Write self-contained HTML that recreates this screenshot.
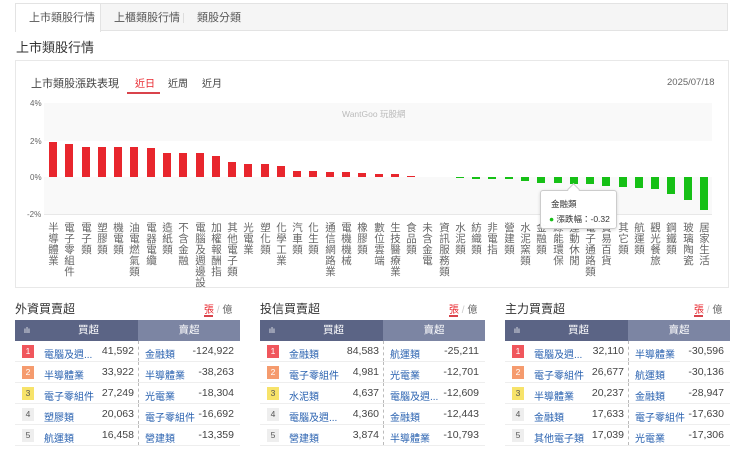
<!DOCTYPE html>
<html><head><meta charset="utf-8">
<style>
*{margin:0;padding:0;box-sizing:border-box}
body{width:740px;height:449px;background:#fff;font-family:"Liberation Sans","Noto Sans CJK TC",sans-serif;color:#333;position:relative;overflow:hidden}
.a{position:absolute}
.tabs{left:15px;top:3px;width:713px;height:28px;background:#f5f5f5;border:1px solid #e3e3e3}
.tab{position:absolute;top:9px;font-size:11px;color:#555}
.b{position:absolute;width:8px}
.r{background:#e8262d}
.g{background:#16c016}
.lb{position:absolute;top:222px;writing-mode:vertical-rl;font-size:10.5px;line-height:12px;width:12px;color:#666;letter-spacing:0.5px}
.ax{position:absolute;left:30px;font-size:8px;color:#666}
.tbl{position:absolute;top:320px;width:225px;font-size:10.5px}
.hd{height:21px;display:flex;color:#fff}
.hd div{line-height:21px;text-align:center}
.row{height:21px;border-bottom:1px solid #eee;position:relative}
.row>div{position:absolute;top:4px;white-space:nowrap}
.n{left:7px;width:12px;height:13px;font-size:8.5px;text-align:center;line-height:13px;color:#555;background:#eee;top:4px!important}
.n1{background:#f0565c;color:#fff}.n2{background:#f59b6e;color:#fff}.n3{background:#f7e36a}
.nm{color:#2a62b0;left:29px;font-size:10px;top:5px!important}
.v{right:106px;color:#444}
.sn{color:#2a62b0;left:130px;font-size:10px;top:5px!important}
.sv{right:6px;color:#444}
.sep{position:absolute;left:123px;top:0!important;bottom:0;border-left:1px dashed #bbb}
.tt{font-size:12px;color:#333}
.zy{font-size:10px;color:#666}
</style></head><body>
<div class="a tabs"></div>
<div class="a" style="left:15px;top:3px;width:86px;height:29px;background:#fff;border:1px solid #e3e3e3;border-bottom:none"></div>
<div class="tab" style="left:29px">上市類股行情</div>
<div class="tab" style="left:114px">上櫃類股行情</div>
<div class="a" style="left:183px;top:13px;width:1px;height:10px;background:#ddd"></div>
<div class="tab" style="left:197px">類股分類</div>
<div class="a" style="left:16px;top:37px;font-size:13px;color:#333">上市類股行情</div>

<div class="a" style="left:15px;top:60px;width:714px;height:228px;border:1px solid #e8e8e8"></div>
<div class="a" style="left:31px;top:75px;font-size:11px;color:#444">上市類股漲跌表現</div>
<div class="a" style="left:135px;top:75px;font-size:10px;color:#e8262d">近日</div>
<div class="a" style="left:127px;top:92px;width:33px;height:2px;background:#d9434b"></div>
<div class="a" style="left:168px;top:75px;font-size:10px;color:#444">近周</div>
<div class="a" style="left:202px;top:75px;font-size:10px;color:#444">近月</div>
<div class="a" style="left:667px;top:77px;font-size:9.5px;color:#666">2025/07/18</div>

<div class="a" style="left:44px;top:103px;width:668px;height:38px;background:#f9f9f9"></div>
<div class="a" style="left:44px;top:177px;width:668px;height:37px;background:#f9f9f9"></div>
<div class="a" style="left:44px;top:214px;width:668px;height:1px;background:#e8e8e8"></div>
<div class="a" style="left:342px;top:108px;font-size:8.5px;color:#bbb">WantGoo 玩股網</div>
<div class="ax" style="top:99px">4%</div>
<div class="ax" style="top:137px">2%</div>
<div class="ax" style="top:173px">0%</div>
<div class="ax" style="top:210px;left:27px">-2%</div>

<div class="b r" style="left:49px;top:142px;height:35px"></div>
<div class="b r" style="left:65px;top:144px;height:33px"></div>
<div class="b r" style="left:82px;top:147px;height:30px"></div>
<div class="b r" style="left:98px;top:147px;height:30px"></div>
<div class="b r" style="left:114px;top:147px;height:30px"></div>
<div class="b r" style="left:130px;top:147px;height:30px"></div>
<div class="b r" style="left:147px;top:148px;height:29px"></div>
<div class="b r" style="left:163px;top:153px;height:24px"></div>
<div class="b r" style="left:179px;top:153px;height:24px"></div>
<div class="b r" style="left:196px;top:153px;height:24px"></div>
<div class="b r" style="left:212px;top:156px;height:21px"></div>
<div class="b r" style="left:228px;top:162px;height:15px"></div>
<div class="b r" style="left:244px;top:164px;height:13px"></div>
<div class="b r" style="left:261px;top:164px;height:13px"></div>
<div class="b r" style="left:277px;top:166px;height:11px"></div>
<div class="b r" style="left:293px;top:171px;height:6px"></div>
<div class="b r" style="left:309px;top:171px;height:6px"></div>
<div class="b r" style="left:326px;top:172px;height:5px"></div>
<div class="b r" style="left:342px;top:172px;height:5px"></div>
<div class="b r" style="left:358px;top:173px;height:4px"></div>
<div class="b r" style="left:375px;top:174px;height:3px"></div>
<div class="b r" style="left:391px;top:174px;height:3px"></div>
<div class="b r" style="left:407px;top:176px;height:1px"></div>
<div class="b g" style="left:456px;top:177px;height:1px"></div>
<div class="b g" style="left:472px;top:177px;height:2px"></div>
<div class="b g" style="left:488px;top:177px;height:2px"></div>
<div class="b g" style="left:505px;top:177px;height:2px"></div>
<div class="b g" style="left:521px;top:177px;height:4px"></div>
<div class="b g" style="left:537px;top:177px;height:6px"></div>
<div class="b g" style="left:554px;top:177px;height:6px"></div>
<div class="b g" style="left:570px;top:177px;height:7px"></div>
<div class="b g" style="left:586px;top:177px;height:7px"></div>
<div class="b g" style="left:602px;top:177px;height:9px"></div>
<div class="b g" style="left:619px;top:177px;height:10px"></div>
<div class="b g" style="left:635px;top:177px;height:11px"></div>
<div class="b g" style="left:651px;top:177px;height:12px"></div>
<div class="b g" style="left:667px;top:177px;height:17px"></div>
<div class="b g" style="left:684px;top:177px;height:23px"></div>
<div class="b g" style="left:700px;top:177px;height:33px"></div>

<div class="lb" style="left:47px">半導體業</div>
<div class="lb" style="left:63px">電子零組件</div>
<div class="lb" style="left:80px">電子類</div>
<div class="lb" style="left:96px">塑膠類</div>
<div class="lb" style="left:112px">機電類</div>
<div class="lb" style="left:128px">油電燃氣類</div>
<div class="lb" style="left:145px">電器電纜</div>
<div class="lb" style="left:161px">造紙類</div>
<div class="lb" style="left:177px">不含金融</div>
<div class="lb" style="left:194px">電腦及週邊設</div>
<div class="lb" style="left:210px">加權報酬指</div>
<div class="lb" style="left:226px">其他電子類</div>
<div class="lb" style="left:242px">光電業</div>
<div class="lb" style="left:259px">塑化類</div>
<div class="lb" style="left:275px">化學工業</div>
<div class="lb" style="left:291px">汽車類</div>
<div class="lb" style="left:307px">化生類</div>
<div class="lb" style="left:324px">通信網路業</div>
<div class="lb" style="left:340px">電機機械</div>
<div class="lb" style="left:356px">橡膠類</div>
<div class="lb" style="left:373px">數位雲端</div>
<div class="lb" style="left:389px">生技醫療業</div>
<div class="lb" style="left:405px">食品類</div>
<div class="lb" style="left:421px">未含金電</div>
<div class="lb" style="left:438px">資訊服務類</div>
<div class="lb" style="left:454px">水泥類</div>
<div class="lb" style="left:470px">紡織類</div>
<div class="lb" style="left:486px">非電指</div>
<div class="lb" style="left:503px">營建類</div>
<div class="lb" style="left:519px">水泥窯類</div>
<div class="lb" style="left:535px">金融類</div>
<div class="lb" style="left:552px">綠能環保</div>
<div class="lb" style="left:568px">運動休閒</div>
<div class="lb" style="left:584px">電子通路類</div>
<div class="lb" style="left:600px">貿易百貨</div>
<div class="lb" style="left:617px">其它類</div>
<div class="lb" style="left:633px">航運類</div>
<div class="lb" style="left:649px">觀光餐旅</div>
<div class="lb" style="left:665px">鋼鐵類</div>
<div class="lb" style="left:682px">玻璃陶瓷</div>
<div class="lb" style="left:698px">居家生活</div>

<div class="a" style="left:540px;top:190px;width:77px;height:39px;background:rgba(255,255,255,0.97);border:1px solid #ccc;border-radius:3px;box-shadow:0 1px 3px rgba(0,0,0,.15)"></div>
<div class="a" style="left:569px;top:185px;width:9px;height:9px;background:#fff;border-left:1px solid #ccc;border-top:1px solid #ccc;transform:rotate(45deg)"></div>
<div class="a" style="left:551px;top:198px;font-size:8.5px;color:#333">金融類</div>
<div class="a" style="left:549px;top:213px;font-size:8.5px;color:#333"><span style="color:#16c016">●</span> 漲跌幅：-0.32</div>

<div class="a tt" style="left:15px;top:300px">外資買賣超</div>
<div class="a zy" style="left:204px;top:301px"><span style="color:#e8262d">張</span> <span style="color:#ccc">/</span> 億</div>
<div class="a" style="left:204px;top:315px;width:9px;height:2px;background:#d9434b"></div>
<div class="a tt" style="left:260px;top:300px">投信買賣超</div>
<div class="a zy" style="left:449px;top:301px"><span style="color:#e8262d">張</span> <span style="color:#ccc">/</span> 億</div>
<div class="a" style="left:449px;top:315px;width:9px;height:2px;background:#d9434b"></div>
<div class="a tt" style="left:505px;top:300px">主力買賣超</div>
<div class="a zy" style="left:694px;top:301px"><span style="color:#e8262d">張</span> <span style="color:#ccc">/</span> 億</div>
<div class="a" style="left:694px;top:315px;width:9px;height:2px;background:#d9434b"></div>

<div class="tbl" style="left:15px">
<div class="hd"><div style="width:24px;background:#5b6485;font-size:8px">ılı</div><div style="width:99px;background:#5b6485">買超</div><div style="width:102px;background:#7c85a3">賣超</div></div>
<div class="row"><div class="sep"></div><div class="n n1">1</div><div class="nm">電腦及週...</div><div class="v">41,592</div><div class="sn">金融類</div><div class="sv">-124,922</div></div>
<div class="row"><div class="sep"></div><div class="n n2">2</div><div class="nm">半導體業</div><div class="v">33,922</div><div class="sn">半導體業</div><div class="sv">-38,263</div></div>
<div class="row"><div class="sep"></div><div class="n n3">3</div><div class="nm">電子零組件</div><div class="v">27,249</div><div class="sn">光電業</div><div class="sv">-18,304</div></div>
<div class="row"><div class="sep"></div><div class="n">4</div><div class="nm">塑膠類</div><div class="v">20,063</div><div class="sn">電子零組件</div><div class="sv">-16,692</div></div>
<div class="row"><div class="sep"></div><div class="n">5</div><div class="nm">航運類</div><div class="v">16,458</div><div class="sn">營建類</div><div class="sv">-13,359</div></div>
</div>

<div class="tbl" style="left:260px">
<div class="hd"><div style="width:24px;background:#5b6485;font-size:8px">ılı</div><div style="width:99px;background:#5b6485">買超</div><div style="width:102px;background:#7c85a3">賣超</div></div>
<div class="row"><div class="sep"></div><div class="n n1">1</div><div class="nm">金融類</div><div class="v">84,583</div><div class="sn">航運類</div><div class="sv">-25,211</div></div>
<div class="row"><div class="sep"></div><div class="n n2">2</div><div class="nm">電子零組件</div><div class="v">4,981</div><div class="sn">光電業</div><div class="sv">-12,701</div></div>
<div class="row"><div class="sep"></div><div class="n n3">3</div><div class="nm">水泥類</div><div class="v">4,637</div><div class="sn">電腦及週...</div><div class="sv">-12,609</div></div>
<div class="row"><div class="sep"></div><div class="n">4</div><div class="nm">電腦及週...</div><div class="v">4,360</div><div class="sn">金融類</div><div class="sv">-12,443</div></div>
<div class="row"><div class="sep"></div><div class="n">5</div><div class="nm">營建類</div><div class="v">3,874</div><div class="sn">半導體業</div><div class="sv">-10,793</div></div>
</div>

<div class="tbl" style="left:505px">
<div class="hd"><div style="width:24px;background:#5b6485;font-size:8px">ılı</div><div style="width:99px;background:#5b6485">買超</div><div style="width:102px;background:#7c85a3">賣超</div></div>
<div class="row"><div class="sep"></div><div class="n n1">1</div><div class="nm">電腦及週...</div><div class="v">32,110</div><div class="sn">半導體業</div><div class="sv">-30,596</div></div>
<div class="row"><div class="sep"></div><div class="n n2">2</div><div class="nm">電子零組件</div><div class="v">26,677</div><div class="sn">航運類</div><div class="sv">-30,136</div></div>
<div class="row"><div class="sep"></div><div class="n n3">3</div><div class="nm">半導體業</div><div class="v">20,237</div><div class="sn">金融類</div><div class="sv">-28,947</div></div>
<div class="row"><div class="sep"></div><div class="n">4</div><div class="nm">金融類</div><div class="v">17,633</div><div class="sn">電子零組件</div><div class="sv">-17,630</div></div>
<div class="row"><div class="sep"></div><div class="n">5</div><div class="nm">其他電子類</div><div class="v">17,039</div><div class="sn">光電業</div><div class="sv">-17,306</div></div>
</div>
</body></html>
